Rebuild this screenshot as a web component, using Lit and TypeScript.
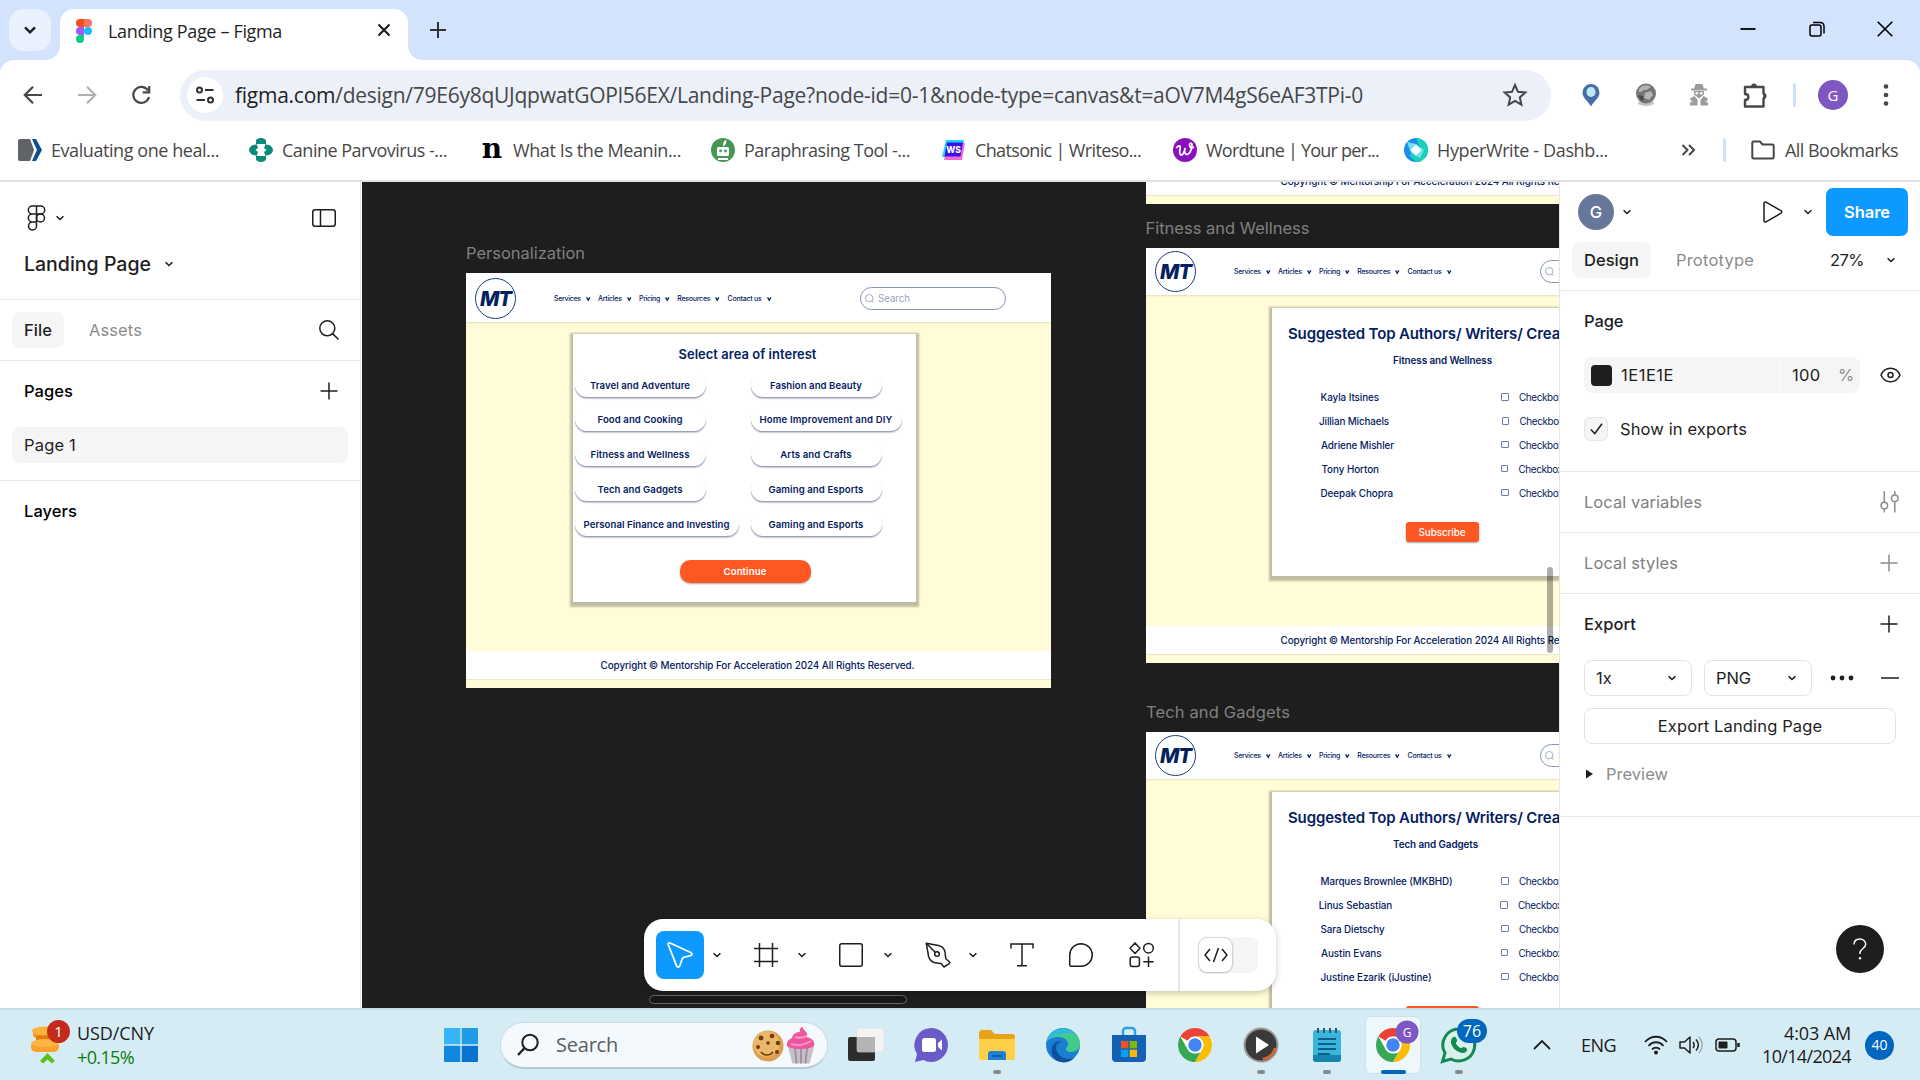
import { LitElement, html, css, svg, TemplateResult } from "lit";
import { customElement, property } from "lit/decorators.js";

/* A single-line label whose tracking is adjusted so it spans a given width. */
@customElement("fit-text")
class FitText extends LitElement {
  @property({ type: Number }) w = 0;
  static styles = css`
    :host { display: block; white-space: nowrap; flex: none; }
  `;
  render() { return html`<slot></slot>`; }
  updated() {
    if (!this.w) return;
    this.style.letterSpacing = "0px";
    const r = document.createRange();
    r.selectNodeContents(this);
    const n = (this.textContent || "").trim().length;
    const natural = r.getBoundingClientRect().width;
    if (n && natural) this.style.letterSpacing = ((this.w - natural) / n).toFixed(3) + "px";
  }
}

const icon = (w: number, h: number, body: unknown, cls = "") =>
  html`<svg class="ic ${cls}" width=${w} height=${h} viewBox="0 0 ${w} ${h}">${body}</svg>`;

const chev = () => icon(10, 8, svg`<path d="M1.600 2.200L5 5.500l3.400-3.300"/>`, "c15");
const plus = (cls = "") => icon(18, 18, svg`<path d="M9 .5v17M.5 9h17"/>`, cls);

const iconBase = css`
  .ic { display: block; flex: none; fill: none; stroke: #1e1e1e; stroke-width: 1.5; overflow: visible; }
  .c15 { stroke-width: 1.6; }
  .grey { stroke: #8c8c8c; }
  .nos { stroke: none; }
`;

/* ---------------------------------------------------------------- browser */

@customElement("browser-chrome")
class BrowserChrome extends LitElement {
  static styles = [iconBase, css`
    :host { display: block; height: 182px; background: #fff; font: 18px "Open Sans", "Noto Sans", sans-serif; color: #474747; box-sizing: border-box; border-bottom: 2px solid #e0e0e0; }
    .strip { height: 60px; background: #d3e2fd; display: grid; grid-template-columns: 42px 348px 60px 1fr 180px; column-gap: 9px; padding: 0 0 0 9px; box-sizing: border-box; }
    .drop { margin-top: 9px; height: 42px; border-radius: 14px; background: #e9f0fe; display: grid; place-items: center; }
    .tab { margin-top: 9px; height: 51px; border-radius: 14px 14px 0 0; background: #fff; display: grid; grid-template-columns: 16px 180px 1fr 16px; column-gap: 16px; padding: 0 16px; align-items: center; box-sizing: border-box; position: relative; color: #1f1f1f; }
    .tab::before, .tab::after { content: ""; position: absolute; bottom: 0; width: 14px; height: 14px; }
    .tab::before { left: -14px; background: radial-gradient(circle at 0 0, transparent 13.5px, #fff 14px); }
    .tab::after { right: -14px; background: radial-gradient(circle at 100% 0, transparent 13.5px, #fff 14px); }
    .tab .ico { margin-bottom: 7px; }
    .tab .title { padding-bottom: 7px; }
    .tab .x { margin: 0 0 9px 2px; }
    .new { margin: 22px 0 0 13px; }
    .win { display: grid; grid-template-columns: 16px 16px 16px; column-gap: 52.500px; margin-top: 21px; }
    .bar { height: 74px; background: #fff; border-radius: 14px 14px 0 0; display: grid; grid-template-columns: 20px 20px 20px 1366px 1fr; align-items: center; padding: 0 0 4px 23px; box-sizing: border-box; column-gap: 34px; }
    .wrap { background: #d3e2fd; }
    .omni { margin-left: -5px; height: 51px; border-radius: 26px; background: #ecf0f9; display: grid; grid-template-columns: 36px 1128px 1fr 24px; column-gap: 12px; align-items: center; padding: 0 24px 0 7px; box-sizing: border-box; font-size: 21px; }
    .tune { width: 36px; height: 36px; border-radius: 50%; background: #fff; display: grid; place-items: center; }
    .omni .host { color: #1f1f1f; }
    .omni fit-text { padding-bottom: 1px; }
    .exts { margin-left: -3px; display: grid; grid-template-columns: 53px 54px 54px 50px 25px 65px 6px; justify-content: start; align-items: center; }
    .sep { width: 3px; height: 24px; border-radius: 2px; background: #cfe0fc; }
    .me { width: 30px; height: 30px; border-radius: 50%; background: #7e57c2; color: #fff; display: grid; place-items: center; font-size: 15px; }
    .marks { height: 32px; display: flex; align-items: center; padding-left: 18px; }
    .mark { width: 231px; display: grid; grid-template-columns: 24px 1fr; column-gap: 9px; align-items: center; flex: none; }
    .tail { display: grid; grid-template-columns: 17px 3px 24px 1fr; align-items: center; margin-left: 46px; column-gap: 25px; }
    .tail .all { margin-left: -15px; }
    .mark fit-text, .tail .all { padding-bottom: 1px; }
    .slab { font: bold 28px/24px "DejaVu Serif", serif; color: #000; text-align: center; padding-bottom: 2px; }
  `];

  mark(ico: TemplateResult, label: string, w: number) {
    return html`<div class="mark">${ico}<fit-text w=${w}>${label}</fit-text></div>`;
  }

  render() {
    return html`
      <div class="strip">
        <div class="drop">${icon(12, 8, svg`<path d="M1 1.3l5 5 5-5" stroke-width="2.4"/>`)}</div>
        <div class="tab">
          ${icon(16, 24, svg`<g stroke="none"><path d="M4 0h4v8H4a4 4 0 010-8z" fill="#f24e1e"/><path d="M8 0h4a4 4 0 010 8H8z" fill="#ff7262"/><path d="M4 8h4v8H4a4 4 0 010-8z" fill="#a259ff"/><circle cx="12" cy="12" r="4" fill="#1abcfe"/><path d="M4 16h4v4a4 4 0 11-4-4z" fill="#0acf83"/></g>`, "ico")}
          <fit-text class="title" w="174">Landing Page – Figma</fit-text><span></span>
          ${icon(12, 12, svg`<path d="M.5.5l11 11M11.5.5l-11 11" stroke-width="2.1"/>`, "x")}
        </div>
        <div class="new">${icon(16, 16, svg`<path d="M8 0v16M0 8h16" stroke="#333" stroke-width="2"/>`)}</div>
        <span></span>
        <div class="win">
          ${icon(16, 16, svg`<path d="M.5 8h15" stroke="#000" stroke-width="1.8"/>`)}
          ${icon(16, 16, svg`<rect x="1" y="4" width="11" height="11" rx="2" stroke="#000"/><path d="M4 1.5h7.500a3.500 3.500 0 013.500 3.500v7.500" stroke="#000"/>`)}
          ${icon(16, 16, svg`<path d="M.7.7l14.600 14.600M15.300.7L.7 15.300" stroke="#000" stroke-width="1.600"/>`)}
        </div>
      </div>
      <div class="wrap"><div class="bar">
        ${icon(20, 20, svg`<path d="M19 10H2.500M10 1.800L1.800 10l8.200 8.200" stroke="#474747" stroke-width="2.200"/>`)}
        ${icon(20, 20, svg`<path d="M1 10h16.500M10 1.800l8.200 8.200-8.200 8.200" stroke="#b0b0b0" stroke-width="2.200"/>`)}
        ${icon(20, 20, svg`<path d="M17 5.500A8 8 0 1018 12M18.200 1v6.300h-6.500" stroke="#474747" stroke-width="2.200"/>`)}
        <div class="omni">
          <div class="tune">${icon(18, 18, svg`<g stroke="#303030" stroke-width="2"><circle cx="3.500" cy="4" r="2.500"/><path d="M9 4h8.500M.5 14H9"/><circle cx="14.500" cy="14" r="2.500"/></g>`)}</div>
          <fit-text w="1128"><span class="host">figma.com</span>/design/79E6y8qUJqpwatGOPl56EX/Landing-Page?node-id=0-1&amp;node-type=canvas&amp;t=aOV7M4gS6eAF3TPi-0</fit-text><span></span>
          ${icon(24, 24, svg`<path d="M12 2l3 6.800 7.300.7-5.500 4.900 1.600 7.300L12 17.900l-6.400 3.800 1.600-7.300L1.700 9.500 9 8.800z" stroke="#474747" stroke-width="2"/>`)}
        </div>
        <div class="exts">
          ${icon(18, 24, svg`<g stroke="none"><path d="M9 1a8.500 8.500 0 018.500 8.500C17.500 15 12 18 9 23.500 6 18 .5 15 .5 9.500A8.500 8.500 0 019 1z" fill="#476fa7"/><ellipse cx="9" cy="9" rx="4.500" ry="5" fill="#bfeaf3"/></g>`)}
          ${icon(22, 24, svg`<g stroke="none"><ellipse cx="11" cy="20" rx="8" ry="3" fill="#c4c4c4"/><circle cx="11" cy="10.500" r="10" fill="#767676"/><path d="M4 6c4-5 10-4 12-2-3 1-3 3-6 3S7 9 4 9zM10 10l6-2 2 4-4 5-5-2z" fill="#b5b5b5"/><path d="M3 12l5 1 1 4-3 1z" fill="#4c4c4c"/></g>`)}
          ${icon(20, 22, svg`<g stroke="none" fill="#9b9b9b"><path d="M6.500 0h7l1.300 4.500h3.200v2H2v-2h3.200z"/><path d="M5 7h10v3.500l-5 4-5-4z"/><circle cx="7.800" cy="9.300" r="1.300" fill="#fff"/><circle cx="12.200" cy="9.300" r="1.300" fill="#fff"/><path d="M1 14.500l4.500-2.500 3 4v5.500H1v-3l3-.5-2-1z"/><path d="M19 14.500L14.500 12l-3 4v5.500H19v-3l-3-.5 2-1z"/></g>`)}
          ${icon(25, 26, svg`<path d="M2 5h18.500v6.500a3 3 0 010 5V24.500H2v-6.500c4.500 0 4.500-6 0-6z" stroke="#474747" stroke-width="2.400" stroke-linejoin="round"/><path d="M8 5a3 3.500 0 016 0zM20.500 11a3 3 0 010 6z" fill="#474747" stroke="none"/>`)}
          <div class="sep"></div>
          <div class="me">G</div>
          ${icon(6, 24, svg`<g fill="#474747" stroke="none"><circle cx="3" cy="3.500" r="2.300"/><circle cx="3" cy="12" r="2.300"/><circle cx="3" cy="20.500" r="2.300"/></g>`)}
        </div>
      </div></div>
      <div class="marks">
        ${this.mark(icon(24, 22, svg`<g stroke="none"><path d="M2 0h10l4 11-4 11H2a2 2 0 01-2-2V2a2 2 0 012-2z" fill="#5f6368"/><path d="M14 0h4l6 11-6 11h-4l5-11z" fill="#0b4f93"/></g>`), "Evaluating one heal...", 168)}
        ${this.mark(icon(24, 24, svg`<g stroke="none"><path d="M12 0c2 0 5 1 5 3v3.500l3 .5c2 .5 4 3 4 5s-2 4.500-4 5l-3 .500V21c0 2-3 3-5 3s-5-1-5-3v-3.500L4 17c-2-.5-4-3-4-5s2-4.500 4-5l3-.500V3c0-2 3-3 5-3z" fill="#0a8a78"/><path d="M7.500 6h9l-1.500 4 2.500 2-2.500 2 1.500 4h-9L9 14l-2.500-2L9 10z" fill="#fff"/></g>`), "Canine Parvovirus -...", 165)}
        ${this.mark(html`<span class="slab">n</span>`, "What Is the Meanin...", 168)}
        ${this.mark(icon(24, 24, svg`<g stroke="none"><circle cx="12" cy="12" r="12" fill="#499557"/><rect x="6" y="9" width="12" height="9" rx="1.500" fill="#fff"/><circle cx="9.500" cy="13" r="1.400" fill="#499557"/><circle cx="14.500" cy="13" r="1.400" fill="#499557"/><path d="M12 8l.5-4 3-2.500-.5 4-2 2.500zM7 20h10v2H7z" fill="#fff"/></g>`), "Paraphrasing Tool -...", 166)}
        ${this.mark(html`<span>${icon(24, 20, svg`<g stroke="none"><path d="M4 0h18l-3 17H0z" fill="#18d4ff"/><path d="M6 3h17l-3 17H2z" fill="#f06ad6"/><path d="M5 2.500h16l-2.500 14H2.500z" fill="#3a10e8"/><text x="11.500" y="12.800" text-anchor="middle" font-family="Inter" font-weight="800" font-size="8.500" fill="#fff">WS</text></g>`)}</span>`, "Chatsonic | Writeso...", 166)}
        ${this.mark(icon(24, 24, svg`<circle cx="12" cy="12" r="12" fill="#8a0fbf" stroke="none"/><path d="M3 10c3-3 5-3 4 1-1 6 1 8 3.500 4 1-1.700 1.500-4 1.500-5-.5 3-.5 6 1.500 6.500 3 .5 6-6 5.500-10-.3-2-2.500-1.500-2.500.5s1.500 4 4.500 2" stroke="#fff" stroke-width="1.700"/>`), "Wordtune | Your per...", 173)}
        ${this.mark(icon(24, 24, svg`<g stroke="none"><circle cx="12" cy="12" r="12" fill="#1d8df0"/><path d="M12 0a12 12 0 010 24L5 17l12-5z" fill="#19d3b8"/><path d="M3 4l9 2 8 6-4 8-9-5z" fill="#6fe3ee"/><path d="M12 6.500l5.500 5.500-5.500 5.500L6.500 12z" fill="#fff"/></g>`), "HyperWrite - Dashb...", 171)}
        <div class="tail">
          ${icon(15, 12, svg`<path d="M1.500 1l5 5-5 5M8 1l5 5-5 5" stroke="#474747" stroke-width="2"/>`)}
          <div class="sep"></div>
          ${icon(24, 20, svg`<path d="M2.500 1.500h6.500l2.500 3h10a1.200 1.200 0 011.200 1.200v11.500a1.200 1.200 0 01-1.200 1.200h-19a1.200 1.200 0 01-1.200-1.200V2.700a1.200 1.200 0 011.200-1.200z" stroke="#474747" stroke-width="2"/>`)}
          <fit-text class="all" w="113">All Bookmarks</fit-text>
        </div>
      </div>`;
  }
}

/* --------------------------------------------------------------- left side */

@customElement("left-panel")
class LeftPanel extends LitElement {
  static styles = [iconBase, css`
    :host { display: block; width: 362px; box-sizing: border-box; background: #fff; border-right: 1px solid #fff; font: 16.500px/24px Inter, sans-serif; color: #1e1e1e; }
    .in { height: 100%; border-right: 1px solid #e6e6e6; }
    section { border-bottom: 1px solid #e6e6e6; box-sizing: border-box; }
    .head { height: 118px; padding: 23px 24px 0 27px; }
    .row { display: flex; align-items: center; }
    .between { justify-content: space-between; }
    .name { font-size: 19.500px; font-weight: 500; gap: 13px; margin: 21px 0 0 -3px; }
    .g13 { gap: 9px; }
    .tabs { height: 61px; padding: 0 21px 0 12px; }
    .tab { height: 36px; padding: 0 12px; border-radius: 8px; background: #f5f5f5; display: grid; align-items: center; font-weight: 500; }
    .off { color: #8c8c8c; margin-left: 25px; flex: 1; }
    .pages { height: 120px; padding: 18px 12px 0; }
    .cap { padding: 0 10px 0 12px; font-weight: 500; color: #000; }
    .page { margin-top: 24px; height: 36px; border-radius: 8px; background: #f5f5f5; padding-left: 12px; display: grid; align-items: center; }
    .layers { padding: 18px 24px; font-weight: 500; color: #000; }
  `];
  render() {
    return html`<div class="in">
      <section class="head">
        <div class="row between">
          <div class="row g13">
            ${icon(19, 26, svg`<path d="M9.500 1H5.300a3.900 3.900 0 000 8h4.200zM9.500 1h4.200a3.900 3.900 0 010 8H9.500zM9.500 9H5.300a3.900 3.900 0 000 8h4.200zM5.300 17a4 4 0 104.200 4v-4z"/><circle cx="13.500" cy="13" r="4"/>`)}
            ${chev()}
          </div>
          ${icon(24, 18, svg`<rect x=".75" y=".75" width="22.500" height="16.500" rx="2.500"/><path d="M8.500 1v16"/>`)}
        </div>
        <div class="row name"><fit-text w="127">Landing Page</fit-text>${chev()}</div>
      </section>
      <section class="tabs row">
        <div class="tab"><fit-text w="28">File</fit-text></div>
        <div class="off"><fit-text w="53">Assets</fit-text></div>
        ${icon(20, 20, svg`<circle cx="8.300" cy="8.300" r="7.500"/><path d="M13.600 13.600l5.900 5.900"/>`)}
      </section>
      <section class="pages">
        <div class="row between cap"><fit-text w="49">Pages</fit-text>${plus()}</div>
        <div class="page"><fit-text w="52">Page 1</fit-text></div>
      </section>
      <div class="layers"><fit-text w="53">Layers</fit-text></div>
    </div>`;
  }
}

/* ------------------------------------------------------------------ canvas */

const boardBase = css`
  :host { display: flex; flex-direction: column; width: 585px; height: 415px; background: #fffcd7; color: #04215f; font: 500 9.900px/12px Inter, sans-serif; box-sizing: border-box; }
  .hdr { height: var(--hh, 47px); flex: none; background: #fff; box-shadow: 0 1px 1.500px rgba(0,0,0,.12); display: flex; align-items: center; padding: var(--hp, 0px) 0 0 9px; box-sizing: border-box; position: relative; }
  .logo { width: 41px; height: 41px; border: 1.200px solid #1b3a78; border-radius: 50%; box-sizing: border-box; display: grid; place-items: center; font: italic 800 20.500px/24px Inter, sans-serif; }
  .nav { display: flex; margin-left: 38px; font-size: 7px; width: 306px; align-items: center; }
  .nav fit-text { margin-right: 5px; }
  .nav svg { margin-right: 7.800px; }
  .find { width: 146px; height: 23px; border: 1px solid #8593b5; border-radius: 12px; box-sizing: border-box; display: flex; align-items: center; gap: 4px; padding-left: 4px; font-size: 9.800px; font-weight: 400; color: #9aa6c2; }
  .body { flex: 1; display: flow-root; }
  .card { background: #fff; height: 268px; box-shadow: 0 1.500px 2px 3px rgba(0,0,0,.25); box-sizing: border-box; }
  .ftr { height: 28px; flex: none; background: #fff; margin-bottom: 9px; box-shadow: 0 1px 1px rgba(0,0,0,.08); display: flex; align-items: center; padding-left: 134.500px; }
`;

const boardHeader = () => {
  const items: [string, number][] = [["Services", 26.7], ["Articles", 23.7], ["Pricing", 21], ["Resources", 33], ["Contact us", 34]];
  return html`<div class="hdr">
    <div class="logo"><fit-text w="31">MT</fit-text></div>
    <div class="nav">${items.map(([t, w]) => html`<fit-text w=${w}>${t}</fit-text>${icon(4.5, 4, svg`<path d="M.6.4l1.600 2.800L3.900.4" stroke="#04215f" stroke-width="1.300"/>`)}`)}</div>
    <div class="find">${icon(9, 9, svg`<circle cx="4.200" cy="4.200" r="3.700" stroke="#a3aeca" stroke-width="1"/><path d="M7 7l1.700 1.700" stroke="#a3aeca" stroke-width="1"/>`)}<fit-text w="32">Search</fit-text></div>
  </div>`;
};
const boardFooter = () => html`<div class="ftr"><fit-text w="314">Copyright © Mentorship For Acceleration 2024 All Rights Reserved.</fit-text></div>`;

@customElement("interest-board")
class InterestBoard extends LitElement {
  static styles = [iconBase, boardBase, css`
    :host { --hh: 49px; --hp: 2px; }
    .card { width: 343.500px; margin: 12px 0 0 106.500px; padding: 13px 0 0 2px; }
    .h { font-size: 12.900px; font-weight: 600; line-height: 16px; margin-left: 104px; }
    .pills { display: grid; grid-template-columns: 176px 160px; grid-auto-rows: 34.750px; margin-top: 9.500px; }
    .pill { height: 24px; min-width: 131px; box-sizing: border-box; border-radius: 12px; background: #fff; box-shadow: 0 1px 0 #97a2b9, 0 2px 1.500px rgba(0,0,0,.22); display: grid; place-items: center; justify-self: start; font-weight: 600; padding: 2px 9px 0; font-size: 9.600px; }
    .go { width: 131px; height: 23px; border-radius: 10.500px; margin: 14px 0 0 105px; background: #ff5722; color: #fff; display: grid; place-items: center; box-shadow: 0 1px 2px rgba(0,0,0,.35); font-weight: 600; font-size: 9.600px; padding-top: 1px; box-sizing: border-box; }
  `];
  items: [string, number][] = [
    ["Travel and Adventure", 100], ["Fashion and Beauty", 92], ["Food and Cooking", 85], ["Home Improvement and DIY", 133],
    ["Fitness and Wellness", 99], ["Arts and Crafts", 71.5], ["Tech and Gadgets", 85], ["Gaming and Esports", 95],
    ["Personal Finance and Investing", 146], ["Gaming and Esports", 95]];
  render() {
    return html`${boardHeader()}
      <div class="body"><div class="card">
        <div class="h"><fit-text w="138">Select area of interest</fit-text></div>
        <div class="pills">${this.items.map(([t, w]) => html`<div class="pill"><fit-text w=${w}>${t}</fit-text></div>`)}</div>
        <div class="go"><fit-text w="43">Continue</fit-text></div>
      </div></div>
      ${boardFooter()}`;
  }
}

/* Lower edge of a frame whose upper part is scrolled out of view. */
@customElement("board-tail")
class BoardTail extends LitElement {
  static styles = [boardBase, css`:host { height: 37px; }`];
  render() { return boardFooter(); }
}

/* name, name width, name shift, checkbox shift */
type Author = [string, number, number, number];
@customElement("authors-board")
class AuthorsBoard extends LitElement {
  @property() topic = "";
  @property({ type: Number }) topicWidth = 99;
  @property({ attribute: false }) authors: Author[] = [];
  static styles = [iconBase, boardBase, css`
    .card { width: 344px; margin: 13px 0 0 126px; padding: 16px 0 0 16px; }
    .h { font-size: 15px; font-weight: 600; line-height: 19px; }
    .sub { margin: 11px 0 0 105px; font-weight: 600; }
    .list { margin: 19px 0 0 32.500px; display: grid; grid-auto-rows: 23.900px; }
    .line { display: grid; grid-template-columns: 180.500px 18px 1fr; align-items: center; }
    .box { width: 7.500px; height: 7.500px; box-sizing: border-box; border: 1px solid #6d7da5; border-radius: 1px; }
    .chk { font-weight: 400; }
    .go { width: 73px; height: 20px; border-radius: 3px; margin: 18px 0 0 117.500px; background: #ff5722; color: #fff; display: grid; place-items: center; box-shadow: 0 1px 2px rgba(0,0,0,.35); }
    .ftr { padding-bottom: 1px; height: 27px; margin-bottom: 9px; }
  `];
  render() {
    return html`${boardHeader()}
      <div class="body"><div class="card">
        <div class="h"><fit-text w="300">Suggested Top Authors/ Writers/ Creators</fit-text></div>
        <div class="sub"><fit-text w=${this.topicWidth}>${this.topic}</fit-text></div>
        <div class="list">${this.authors.map(([n, w, dx, bx]) => html`<div class="line"><fit-text w=${w} style="margin-left:${dx}px">${n}</fit-text><span class="box" style="margin-left:${bx}px"></span><fit-text class="chk" w="44" style="margin-left:${bx}px">Checkbox</fit-text></div>`)}</div>
        <div class="go"><fit-text w="47">Subscribe</fit-text></div>
      </div></div>
      ${boardFooter()}`;
  }
}

@customElement("design-canvas")
class DesignCanvas extends LitElement {
  static styles = [iconBase, css`
    :host { display: block; position: relative; overflow: hidden; background: #1e1e1e; font: 16.500px/20px Inter, sans-serif; color: #808080; }
    .node { position: absolute; }
    .a { left: 104px; top: 91px; } .al { left: 104px; top: 61px; }
    .b { left: 784px; top: -15px; }
    .c { left: 784px; top: 66px; } .cl { left: 783.500px; top: 36px; }
    .d { left: 784px; top: 550px; } .dl { left: 784px; top: 520px; }
    .vs { right: 6px; top: 385px; width: 6px; height: 86px; border-radius: 3px; background: rgba(0,0,0,.32); }
    .hs { left: 287px; top: 813px; width: 258px; height: 9px; box-sizing: border-box; border: 1px solid #666; border-radius: 5px; background: #171717; }
    .tools { left: 282px; top: 737px; width: 632px; height: 72px; box-sizing: border-box; border-radius: 19px; background: #fff; box-shadow: 0 2px 6px rgba(0,0,0,.22); display: grid; grid-template-columns: 56px 42px 43px 42px 44px 42px 43px 42px 59px 60px 49px 1fr; align-items: center; padding-left: 12px; }
    .sel { width: 48px; height: 48px; border-radius: 8px; background: #0d99ff; display: grid; place-items: center; }
    .sel .ic { stroke: #fff; stroke-width: 1.700; }
    .dev { align-self: stretch; border-left: 2px solid #e6e6e6; padding: 18px 0 0 19px; }
    .track { width: 59px; height: 36px; border-radius: 8px; background: #f5f5f5; }
    .knob { width: 33px; height: 34px; border-radius: 8px; background: #fff; display: grid; place-items: center; box-shadow: 0 0 1px 1px rgba(0,0,0,.12), 0 1px 3px rgba(0,0,0,.15); position: relative; top: 1px; }
  `];
  render() {
    return html`
      <fit-text class="node al" w="119">Personalization</fit-text>
      <interest-board class="node a"></interest-board>
      <board-tail class="node b"></board-tail>
      <fit-text class="node cl" w="164">Fitness and Wellness</fit-text>
      <authors-board class="node c" topic="Fitness and Wellness" .topicWidth=${99}
        .authors=${[["Kayla Itsines", 58.5, 0, 0], ["Jillian Michaels", 70, -1.5, .5], ["Adriene Mishler", 73, .5, 0], ["Tony Horton", 57.5, 1, -.5], ["Deepak Chopra", 72.5, 0, 0]] as Author[]}></authors-board>
      <fit-text class="node dl" w="144">Tech and Gadgets</fit-text>
      <authors-board class="node d" topic="Tech and Gadgets" .topicWidth=${85}
        .authors=${[["Marques Brownlee (MKBHD)", 132, 0, 0], ["Linus Sebastian", 73.5, -1.8, -1], ["Sara Dietschy", 64, 0, 0], ["Austin Evans", 60.5, .5, -.5], ["Justine Ezarik (iJustine)", 111, 0, 0]] as Author[]}></authors-board>
      <div class="node vs"></div>
      <div class="node hs"></div>
      <div class="node tools">
        <div class="sel">${icon(26, 26, svg`<path d="M1.200 2.600C.8 1.400 1.900.4 3.100 1l20.700 9.400c1.600.8 1.400 2.800-.2 3.200l-6.300 1.500c-1 .3-1.700.9-2.100 1.800l-2.400 7c-.6 1.500-2.700 1.500-3.200 0z" stroke-linejoin="round"/>`)}</div>
        ${chev()}
        ${icon(24, 24, svg`<path d="M5.500 0v24M18.500 0v24M0 5.500h24M0 18.500h24"/>`)}
        ${chev()}
        ${icon(24, 24, svg`<rect x=".75" y=".75" width="22.500" height="22.500" rx="2"/>`)}
        ${chev()}
        ${icon(26, 26, svg`<path d="M1.300 1.300L13.500 3.600c4.500 1 6.800 5 6.800 9.300l.5 3.800 3.900 3.300c.6.500-.1 1-.6 1.700L19 25l-3-3.600-4-.4c-4-.3-7.200-2.500-8.400-6.500z" stroke-linejoin="round"/><path d="M1.300 1.300l8.900 8.900"/><circle cx="12" cy="12" r="2.300"/>`)}
        ${chev()}
        ${icon(24, 24, svg`<path d="M1 5.500V1h22v4.500M12 1v21.500M7 22.700h10"/>`)}
        ${icon(24, 24, svg`<path d="M12 .75a11.250 11.250 0 010 22.500H2a1.250 1.250 0 01-1.250-1.250V12A11.250 11.250 0 0112 .75z"/>`)}
        ${icon(25, 26, svg`<path d="M6 .9l5 5.300-5 5.300-5-5.300z" stroke-linejoin="round"/><circle cx="19.500" cy="6.200" r="4.800"/><rect x="1.200" y="15" width="9.200" height="9.500" rx="2.200"/><path d="M19.500 14.500v10.500M14.300 19.700h10.400"/>`)}
        <div class="dev"><div class="track"><div class="knob">${icon(24, 14, svg`<path d="M6 1L1 7l5 6M18 1l5 6-5 6M14.500 0l-5 14" stroke-linejoin="round"/>`)}</div></div></div>
      </div>`;
  }
}

/* -------------------------------------------------------------- right side */

@customElement("right-panel")
class RightPanel extends LitElement {
  static styles = [iconBase, css`
    :host { display: block; width: 361px; box-sizing: border-box; background: #fff; border-left: 1px solid #e6e6e6; font: 16.500px/24px Inter, sans-serif; color: #1e1e1e; position: relative; }
    section { border-bottom: 1px solid #e6e6e6; box-sizing: border-box; padding: 0 24px; }
    .row { display: flex; align-items: center; }
    .between { justify-content: space-between; }
    .top { height: 109px; padding: 6px 12px 0; }
    .r1 { display: grid; grid-template-columns: 44px 1fr 40px 23px 82px; align-items: center; height: 48px; padding-left: 6px; }
    .me { width: 36px; height: 36px; border-radius: 50%; background: #667799; color: #fff; display: grid; place-items: center; font-weight: 500; }
    .share { height: 48px; border-radius: 7px; background: #0d99ff; color: #fff; font-weight: 600; display: grid; place-items: center; }
    .r2 { height: 36px; margin-top: 6px; }
    .tab { height: 36px; width: 79px; box-sizing: border-box; padding-left: 12px; border-radius: 8px; background: #f5f5f5; display: grid; align-items: center; font-weight: 500; }
    .off { color: #8c8c8c; margin-left: 25px; flex: 1; }
    .zoom { margin-right: 22px; }
    .r2 .c15 { margin-right: 12px; }
    .page { height: 181px; padding-top: 18px; }
    .m5 { font-weight: 500; }
    .fill { margin-top: 24px; }
    .field { flex: none; width: 276px; height: 36px; border-radius: 8px; background: #f5f5f5; display: grid; grid-template-columns: 21px 167px 46px 1fr; align-items: center; padding-left: 7px; box-sizing: border-box; }
    .sw { width: 21px; height: 21px; border-radius: 4px; background: #1e1e1e; }
    .hex { margin-left: 9px; }
    .op { height: 33px; border-left: 1.500px solid #fff; padding-left: 12px; display: grid; align-items: center; }
    .pct { color: #8c8c8c; margin-left: 13px; }
    .eye { margin-left: 20px; }
    .show { margin-top: 24px; gap: 12px; }
    .cb { width: 24px; height: 24px; box-sizing: border-box; border: 1px solid #e6e6e6; border-radius: 6px; background: #f5f5f5; display: grid; place-items: center; }
    .local { height: 61px; color: #7f7f7f; display: flex; align-items: center; justify-content: space-between; padding-right: 21px; }
    .styles { padding-right: 22.500px; }
    .export { height: 223px; padding-top: 18px; }
    .exp { display: flex; justify-content: space-between; font-weight: 500; margin-right: -1.500px; align-items: center; }
    .opts { display: grid; grid-template-columns: 108px 108px 24px 18px; column-gap: 12px; margin-top: 24px; align-items: center; }
    .more { margin-left: 5.500px; }
    .less { margin-left: 21px; }
    .sl { height: 36px; box-sizing: border-box; border: 1px solid #e3e3e3; border-radius: 8px; display: flex; align-items: center; justify-content: space-between; padding: 0 14px 0 11px; }
    .btn { margin-top: 12px; height: 36px; box-sizing: border-box; border: 1px solid #e3e3e3; border-radius: 8px; display: grid; place-items: center; }
    .prev { margin-top: 18px; color: #8c8c8c; gap: 13px; padding-left: 2px; }
    .help { position: absolute; right: 36px; bottom: 35px; width: 48px; height: 48px; border-radius: 50%; background: #1e1e1e; display: grid; place-items: center; }
  `];
  render() {
    return html`
      <section class="top">
        <div class="r1">
          <div class="me">G</div>${chev()}
          ${icon(20, 22, svg`<path d="M1 2.500C1 1.300 2 .7 3 1.200l15 8.500c1 .6 1 1.900 0 2.500L3 20.800c-1 .6-2 0-2-1.200z" stroke-linejoin="round"/>`)}
          ${chev()}
          <div class="share"><fit-text w="46">Share</fit-text></div>
        </div>
        <div class="row r2">
          <div class="tab"><fit-text w="55">Design</fit-text></div>
          <div class="off"><fit-text w="78">Prototype</fit-text></div>
          <fit-text class="zoom" w="34">27%</fit-text>${chev()}
        </div>
      </section>
      <section class="page">
        <fit-text class="m5" w="39.500">Page</fit-text>
        <div class="row fill">
          <div class="field">
            <span class="sw"></span><fit-text class="hex" w="53">1E1E1E</fit-text>
            <div class="op"><fit-text w="28.500">100</fit-text></div><fit-text class="pct" w="12">%</fit-text>
          </div>
          <span class="eye">${icon(21, 16, svg`<path d="M1 8c2-4.500 5.500-6.800 9.500-6.800S18 3.500 20 8c-2 4.500-5.500 6.800-9.500 6.800S3 12.500 1 8z"/><circle cx="10.500" cy="8" r="2.500"/>`)}</span>
        </div>
        <div class="row show"><div class="cb">${icon(13, 12, svg`<path d="M.8 6.500l4 4L12 .8"/>`)}</div><fit-text w="127">Show in exports</fit-text></div>
      </section>
      <section class="local"><fit-text w="118">Local variables</fit-text>
        ${icon(19, 22, svg`<path d="M4.300 0v11M4.300 18v3.500M14.800 0v4M14.800 11v10.500"/><circle cx="4.300" cy="14.500" r="3.300"/><circle cx="14.800" cy="7.300" r="3.300"/>`, "grey")}</section>
      <section class="local styles"><fit-text w="94">Local styles</fit-text>${plus("grey")}</section>
      <section class="export">
        <div class="exp"><fit-text w="52">Export</fit-text>${plus()}</div>
        <div class="opts">
          <div class="sl"><fit-text w="16">1x</fit-text>${chev()}</div>
          <div class="sl"><fit-text w="35">PNG</fit-text>${chev()}</div>
          <span class="more">${icon(24, 6, svg`<g fill="#1e1e1e" stroke="none"><circle cx="3" cy="3" r="2.400"/><circle cx="12" cy="3" r="2.400"/><circle cx="21" cy="3" r="2.400"/></g>`)}</span>
          <span class="less">${icon(18, 2, svg`<path d="M0 1h18"/>`)}</span>
        </div>
        <div class="btn"><fit-text w="164.500">Export Landing Page</fit-text></div>
        <div class="row prev">${icon(7, 10, svg`<path d="M0 .5v9L7 5z" fill="#1e1e1e" stroke="none"/>`)}<fit-text w="62">Preview</fit-text></div>
      </section>
      <div class="help">${icon(14, 22, svg`<path d="M1 6.500C1 3 3.500 1 6.800 1s5.900 2.200 5.900 5.200c0 4.300-5.700 4.200-5.700 8.800v1" stroke="#fff" stroke-width="1.400"/><circle cx="7" cy="20.300" r="1.200" fill="#fff" stroke="none"/>`)}</div>`;
  }
}

/* ----------------------------------------------------------------- taskbar */

const chromeLogo = svg`<g stroke="none"><circle cx="18" cy="18" r="17" fill="#fff"/><path d="M18 1a17 17 0 0114.700 8.500H18a8.500 8.500 0 00-7.400 4.300L3.300 9.500A17 17 0 0118 1z" fill="#ea4335"/><path d="M32.700 9.500A17 17 0 0118 35l7.400-12.800A8.500 8.500 0 0025.400 13.800 8.500 8.500 0 0018 9.500z" fill="#fbbc05"/><path d="M3.300 9.500l7.300 12.700A8.500 8.500 0 0018 26.500c2.500 0 4-.5 5.500-1.500L18 35A17 17 0 013.300 9.500z" fill="#34a853"/><circle cx="18" cy="18" r="8.300" fill="#fff"/><circle cx="18" cy="18" r="6.700" fill="#4285f4"/></g>`;

@customElement("task-bar")
class TaskBar extends LitElement {
  static styles = [iconBase, css`
    :host { display: grid; grid-template-columns: 428px 1073px 1fr; height: 72px; box-sizing: border-box; border-top: 2px solid #c6dee6; background: #d6ecf4; font: 18px/24px "Open Sans", "Noto Sans", sans-serif; color: #1b1b1b; }
    .w { display: grid; grid-template-columns: 38px 1fr; column-gap: 8px; padding: 11px 0 0 31px; align-content: start; }
    .up { color: #0f7b0f; }
    .mid { display: flex; align-items: center; height: 70px; }
    .start { margin: 0 22px 0 16px; }
    .search { width: 328px; height: 47px; box-sizing: border-box; border-radius: 24px; background: #f3f9fc; border: 1px solid #c9dce6; border-bottom: 2px solid #b5cbd6; display: grid; grid-template-columns: 22px 1fr 66px; column-gap: 17px; align-items: center; padding: 0 9px 0 16px; color: #5c5f61; margin-right: 4px; font-size: 20px; flex: none; }
    .app { width: 66px; height: 70px; display: grid; place-items: center; position: relative; flex: none; }
    .app.run::after { content: ""; position: absolute; bottom: 6px; width: 8px; height: 4px; border-radius: 2px; background: #84898c; }
    .app.on::after { width: 25px; background: #0067c0; }
    .tile { width: 56px; height: 58px; border-radius: 6px; background: #eef7fb; border: 1px solid #cfe1e9; box-sizing: border-box; display: grid; place-items: center; }
    .tray { display: grid; align-items: center; padding: 0 26px 0 32px; height: 70px; grid-template-columns: 48px 63px 35px 36px 36px 100px 1fr; }
    .clock { justify-self: end; display: grid; justify-items: end; line-height: 23px; }
    .n { width: 29px; height: 29px; border-radius: 50%; background: #0067c0; color: #fff; display: grid; place-items: center; font-size: 14px; justify-self: end; }
  `];
  app(body: unknown, cls = "") { return html`<div class="app ${cls}">${icon(36, 36, body)}</div>`; }
  render() {
    return html`
      <div class="w">
        ${icon(36, 48, svg`<g stroke="none"><rect x="2" y="7" width="26" height="10" rx="4" fill="#f7931e"/><rect x="5" y="14" width="24" height="9" rx="4" fill="#e87a0c"/><rect x="0" y="20" width="28" height="11" rx="5" fill="#fba22a"/><ellipse cx="14" cy="10" rx="13" ry="4.500" fill="#ffb13d"/><ellipse cx="14" cy="22" rx="13.500" ry="4" fill="#ffb545"/><circle cx="27.500" cy="10.500" r="11.500" fill="#c42b1c"/><text x="27.500" y="16" text-anchor="middle" font-size="15" fill="#fff">1</text><path d="M16.500 32l7.500 8-3 2.500-4.500-4-4.500 4-3-2.500z" fill="#5cc21b"/></g>`)}
        <div><fit-text w="77">USD/CNY</fit-text><fit-text class="up" w="57">+0.15%</fit-text></div>
      </div>
      <div class="mid">
        <span class="start">${icon(34, 34, svg`<g stroke="none"><path d="M0 1a1 1 0 011-1h15.300v16.300H0z" fill="#35b5f5"/><path d="M17.700 0H33a1 1 0 011 1v15.300H17.700z" fill="#1f9be8"/><path d="M0 17.700h16.300V34H1a1 1 0 01-1-1z" fill="#0f88de"/><path d="M17.700 17.700H34V33a1 1 0 01-1 1H17.700z" fill="#0774d1"/></g>`)}</span>
        <div class="search">
          ${icon(22, 22, svg`<circle cx="13" cy="8.500" r="7.700" stroke-width="2"/><path d="M7.300 14.300L1 21" stroke-width="2.400"/>`)}
          <fit-text w="62">Search</fit-text>
          ${icon(64, 38, svg`<g stroke="none"><circle cx="16" cy="20" r="15.500" fill="#dca04e"/><circle cx="14.500" cy="18" r="13" fill="#ebb768"/><g fill="#6f3d18"><circle cx="9" cy="12" r="2.400"/><circle cx="20" cy="10" r="2.300"/><circle cx="26" cy="17" r="2.300"/><circle cx="16" cy="17" r="1.800"/><circle cx="6" cy="21" r="2"/><circle cx="25" cy="26" r="2"/></g><path d="M9 26c3 4 9 4 12 0" stroke="#6f3d18" stroke-width="1.600" fill="none"/><path d="M36 21h26l-4.500 16.500h-17z" fill="#c9bfc8"/><path d="M43 22l1.500 15.500M49 22v15.500M55 22l-1.500 15.500" stroke="#9c8fa2" stroke-width="1.800"/><path d="M35 20c-1-5 3-7 5-8 1-5 5-6 8-6-1-3 1-5 3-5-1 2 2 3 3 5 2 2 1 4 0 5 4 0 10 4 8 9-4 4-23 4-27 0z" fill="#f0569f"/><path d="M39 18c6 2 14 1 20-3M43 11c4 1 8 1 11-1" stroke="#ff9cc9" stroke-width="2" fill="none"/></g>`)}
        </div>
        ${this.app(svg`<g stroke="none"><rect x="1" y="10" width="27" height="24" rx="2" fill="#2d2d2d"/><rect x="10" y="1" width="27" height="24" rx="2" fill="#f3f3f3" stroke="#dcdcdc" stroke-width=".6"/><path d="M10 10h18v15H12a2 2 0 01-2-2z" fill="#b4b4b4"/></g>`)}
        ${this.app(svg`<g stroke="none"><path d="M18 1a17 17 0 110 34c-3 0-5.500-.8-7.500-2L2 35l2-8A17 17 0 0118 1z" fill="#6a5cc8"/><rect x="9" y="11" width="14" height="14" rx="2.500" fill="#fff"/><path d="M25 16l4-3.500v11L25 20z" fill="#fff"/></g>`)}
        ${this.app(svg`<g stroke="none"><path d="M0 6a3 3 0 013-3h9l4 4h17a3 3 0 013 3v8H0z" fill="#e8a317"/><path d="M0 12h36v18a3 3 0 01-3 3H3a3 3 0 01-3-3z" fill="#ffcf48"/><path d="M9 33v-6a3 3 0 013-3h12a3 3 0 013 3v6z" fill="#1b81d6"/><rect x="13" y="28" width="10" height="2" fill="#0d5fa8"/></g>`, "run")}
        ${this.app(svg`<g stroke="none"><circle cx="18" cy="18" r="17" fill="#1a7fd0"/><path d="M1.500 15C4 4 14 0 22 2c9 2 13 9 13 15 0 5-4 8-9 8-4 0-5-2-5-3 0-2 2-2 2-5 0-4-4-7-9-7C8 10 3 12 1.500 15z" fill="#42ca8a"/><path d="M1.500 15C3 5 13 0 21 2c5 1 8 3 10 6-8-3-22-3-29.500 7z" fill="#2fb8e0"/><path d="M11 20c0 8 7 12 13 12 3 0 5-1 6-2-4 6-13 7-19 3-6-5-6-14 0-18 2-1 5-1 6 0-3 0-6 2-6 5z" fill="#0f4fa0"/></g>`)}
        ${this.app(svg`<g stroke="none"><path d="M12 8V4a3 3 0 013-3h6a3 3 0 013 3v4" fill="none" stroke="#2aa3ea" stroke-width="2.500"/><path d="M1 8h34v23a4 4 0 01-4 4H5a4 4 0 01-4-4z" fill="#1460b4"/><path d="M10 14h7.300v7.300H10z" fill="#f25022"/><path d="M18.700 14H26v7.300h-7.300z" fill="#7fba00"/><path d="M10 22.700h7.300V30H10z" fill="#00a4ef"/><path d="M18.700 22.700H26V30h-7.300z" fill="#ffb900"/></g>`)}
        ${this.app(chromeLogo)}
        ${this.app(svg`<circle cx="18" cy="18" r="16.500" fill="#3a3a3a" stroke="#9a9a9a" stroke-width="2"/><path d="M13 9.500l13 8.500-13 8.500z" fill="#fff" stroke="none"/><path d="M20 32a15 15 0 0012-11" stroke="#e6622a" stroke-width="2.500"/>`, "run")}
        ${this.app(svg`<g stroke="none"><rect x="4" y="3" width="28" height="32" rx="3" fill="#38b6dd"/><path d="M4 28h28v4a3 3 0 01-3 3H7a3 3 0 01-3-3z" fill="#1784b0"/><path d="M9 12h18M9 17h18M9 22h18M9 27h12" stroke="#0e5f86" stroke-width="2"/><path d="M9 1v5M15 1v5M21 1v5M27 1v5" stroke="#36536a" stroke-width="2"/></g>`, "run")}
        <div class="app run on"><div class="tile">${icon(36, 36, svg`${chromeLogo}<circle cx="32" cy="5" r="11.500" fill="#7e57c2" stroke="none"/><text x="32" y="9.500" text-anchor="middle" font-size="12" fill="#fff" stroke="none">G</text>`)}</div></div>
        ${this.app(svg`<path d="M18 2a16 16 0 11-8 30l-8.500 2.500L4 26A16 16 0 0118 2z" fill="#d9f1ea" stroke="#148a54" stroke-width="3"/><path d="M12.500 10c2-1 3 1 3.500 3s-1.500 2-1 3.500c1 2 2.500 3.500 4.500 4.500 1.500.5 2-1.500 3.500-1s4 1.500 3 3.500c-1 2.500-4 3-7 2-5-2-8-5-9-9.500-.5-2.500.5-5 2.500-6z" fill="#148a54" stroke="none"/><rect x="16" y="-8" width="30" height="24" rx="12" fill="#0067c0" stroke="none"/><text x="31" y="10" text-anchor="middle" font-size="16" fill="#fff" stroke="none">76</text>`, "run")}
      </div>
      <div class="tray">
        ${icon(18, 10, svg`<path d="M1 9l8-8 8 8" stroke-width="1.800"/>`)}
        <fit-text w="35">ENG</fit-text>
        ${icon(24, 20, svg`<g stroke-width="1.800"><path d="M1 7c6-7 16-7 22 0M4.500 11c4-5 11-5 15 0M8 14.500c2-2.500 6-2.500 8 0"/></g><circle cx="12" cy="17.500" r="2" fill="#1e1e1e" stroke="none"/>`)}
        ${icon(24, 20, svg`<path d="M1 7h4.500L11 2v16l-5.500-5H1z" stroke-linejoin="round"/><path d="M14 7c1.500 2 1.500 4 0 6M17 4.500c3 3.500 3 7.500 0 11"/><path d="M20 2c4 5 4 11 0 16" stroke="#9fb0b6"/>`)}
        ${icon(26, 16, svg`<rect x="1" y="2" width="20" height="12" rx="3"/><rect x="3.500" y="4.500" width="9" height="7" rx="1" fill="#1e1e1e" stroke="none"/><path d="M23.500 6v4" stroke-width="2.500"/>`)}
        <div class="clock"><fit-text w="67">4:03 AM</fit-text><fit-text w="89">10/14/2024</fit-text></div>
        <div class="n">40</div>
      </div>`;
  }
}

@customElement("app-root")
class AppRoot extends LitElement {
  static styles = css`
    :host { display: block; width: 1920px; height: 1080px; overflow: hidden; background: #fff; }
    .mid { display: grid; grid-template-columns: 362px 1197px 361px; height: 826px; }
  `;
  render() {
    return html`<browser-chrome></browser-chrome>
      <div class="mid"><left-panel></left-panel><design-canvas></design-canvas><right-panel></right-panel></div>
      <task-bar></task-bar>`;
  }
}
